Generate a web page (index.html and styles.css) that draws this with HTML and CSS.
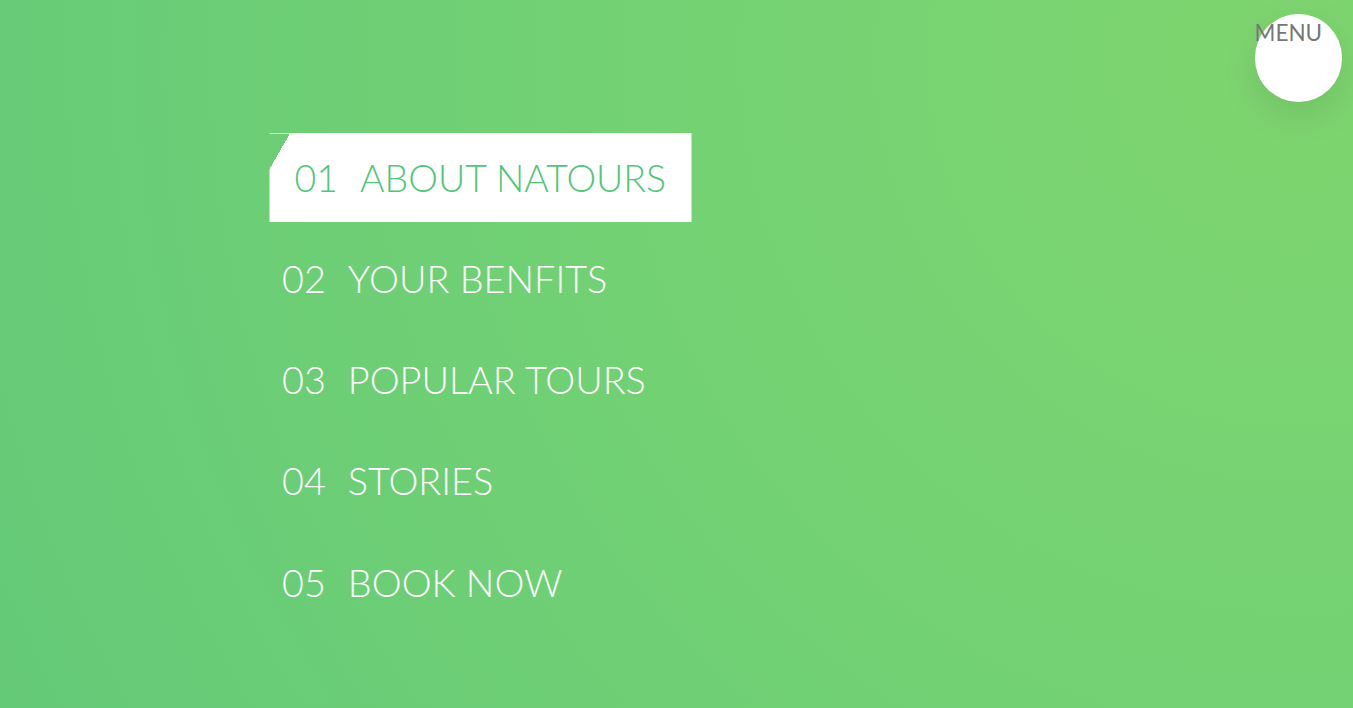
FILE: index.html
```html
<!DOCTYPE html>
<html lang="en">
<head>
<meta charset="utf-8">
<title>Natours navigation</title>
<link rel="stylesheet" href="styles.css">
</head>
<body>
<div class="navigation">
  <label class="navigation__button">MENU</label>
  <nav class="navigation__nav">
    <ul class="navigation__list">
      <li class="navigation__item"><a href="#" class="navigation__link navigation__link--active"><span class="navigation__num">01</span>About Natours</a></li>
      <li class="navigation__item"><a href="#" class="navigation__link"><span class="navigation__num">02</span>Your benfits</a></li>
      <li class="navigation__item"><a href="#" class="navigation__link"><span class="navigation__num">03</span>Popular tours</a></li>
      <li class="navigation__item"><a href="#" class="navigation__link"><span class="navigation__num">04</span>Stories</a></li>
      <li class="navigation__item"><a href="#" class="navigation__link"><span class="navigation__num">05</span>Book now</a></li>
    </ul>
  </nav>
</div>
</body>
</html>
```

FILE: styles.css
```css
* { margin: 0; padding: 0; box-sizing: border-box; }

html, body { height: 100%; }

body {
  font-family: Lato, "Open Sans", sans-serif;
  overflow: hidden;
}

.navigation {
  position: relative;
  height: 708px;
  background: radial-gradient(circle at 1298px 58px, #7ed56f 0, #74d273 620px, #67cb77 1300px, #64c978 1500px);
}

.navigation__button {
  position: absolute;
  top: 14px;
  right: 11px;
  width: 87.5px;
  height: 87.5px;
  border-radius: 50%;
  background: #fff;
  box-shadow: 0 12.5px 37.5px rgba(0, 0, 0, 0.1);
  font-size: 22.5px;
  line-height: 1;
  color: #777;
  padding-top: 8px;
  padding-left: 0;
}

.navigation__nav {
  padding-top: 133px;
  padding-left: 257px;
}

.navigation__list {
  list-style: none;
  display: flex;
  flex-direction: column;
  align-items: flex-start;
  gap: 12.5px;
}

.navigation__link {
  display: inline-block;
  font-size: 37.8px;
  font-weight: 300;
  line-height: 63.75px;
  padding: 12.5px 25px;
  color: #fff;
  text-decoration: none;
  text-transform: uppercase;
  white-space: nowrap;
}

.navigation__num {
  display: inline-block;
  margin-right: 22px;
}

.navigation__link--active {
  font-size: 37.5px;
  color: #55c57a;
  background:
    linear-gradient(rgba(255, 255, 255, 0.7), rgba(255, 255, 255, 0.7)) top left / 22px 1px no-repeat,
    linear-gradient(120deg, transparent 0, transparent 18px, #fff 18px);
  transform: translateX(12.5px);
}
```
